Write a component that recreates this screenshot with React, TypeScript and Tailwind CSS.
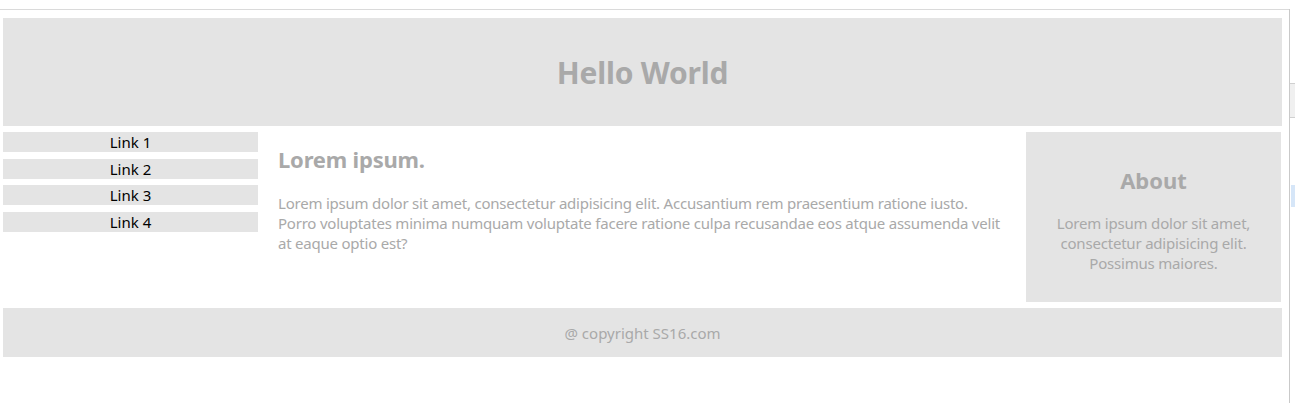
export default function App() {
  const font = { fontFamily: '"Noto Sans", "Noto Sans CJK KR", sans-serif' };
  return (
    <div className="flex w-[1295px] h-[403px] bg-white overflow-hidden" style={font}>
      <div className="w-[1289px] pt-[9px]">
        <div className="h-px bg-[#dadada]" />
        <div className="pl-[3px] pr-[7px] pt-[8px]">
          <header className="h-[108px] bg-[#e4e4e4] flex items-center justify-center pt-[2px]">
            <h1 className="text-[30px] font-bold text-[#a9a9a9] leading-none tracking-[-0.2px]">Hello World</h1>
          </header>
          <div className="mt-[6px] grid grid-cols-[255px_768px_255px] h-[170px]">
            <nav className="flex flex-col gap-[6.67px]">
              {["Link 1", "Link 2", "Link 3", "Link 4"].map((l) => (
                <a key={l} href="#" className="h-[20px] bg-[#e4e4e4] text-black text-[15px] leading-[20px] text-center">
                  {l}
                </a>
              ))}
            </nav>
            <main className="px-[20px] pt-[13px]">
              <h2 className="text-[22px] font-bold text-[#a9a9a9] leading-[28px] tracking-[-0.2px]">Lorem ipsum.</h2>
              <p className="mt-[20px] text-[15px] leading-[20px] text-[#a9a9a9] whitespace-nowrap tracking-[-0.22px]">
                Lorem ipsum dolor sit amet, consectetur adipisicing elit. Accusantium rem praesentium ratione iusto.
                <br />
                Porro voluptates minima numquam voluptate facere ratione culpa recusandae eos atque assumenda velit
                <br />
                at eaque optio est?
              </p>
            </main>
            <aside className="bg-[#e4e4e4] flex flex-col items-center pt-[34px]">
              <h2 className="text-[22px] font-bold text-[#a9a9a9] leading-[28px]">About</h2>
              <p className="mt-[19px] text-[15px] leading-[20px] text-[#a9a9a9] text-center whitespace-nowrap tracking-[-0.2px]">
                Lorem ipsum dolor sit amet,
                <br />
                consectetur adipisicing elit.
                <br />
                Possimus maiores.
              </p>
            </aside>
          </div>
          <footer className="mt-[6px] h-[49px] bg-[#e4e4e4] flex items-center justify-center">
            <span className="text-[15px] text-[#a9a9a9] leading-[20px]">@ copyright SS16.com</span>
          </footer>
        </div>
      </div>
      <div className="flex-1 pt-[9px] flex">
        <div className="w-px bg-[#c9c9c9]" />
        <div className="flex-1 flex flex-col">
          <div className="h-[74px]" />
          <div className="h-[35px] bg-[#f0f0f0] border-y border-[#d0d0d0]" />
          <div className="h-[67px]" />
          <div className="ml-px h-[22px] bg-[#d6e6f8]" />
        </div>
      </div>
    </div>
  );
}
